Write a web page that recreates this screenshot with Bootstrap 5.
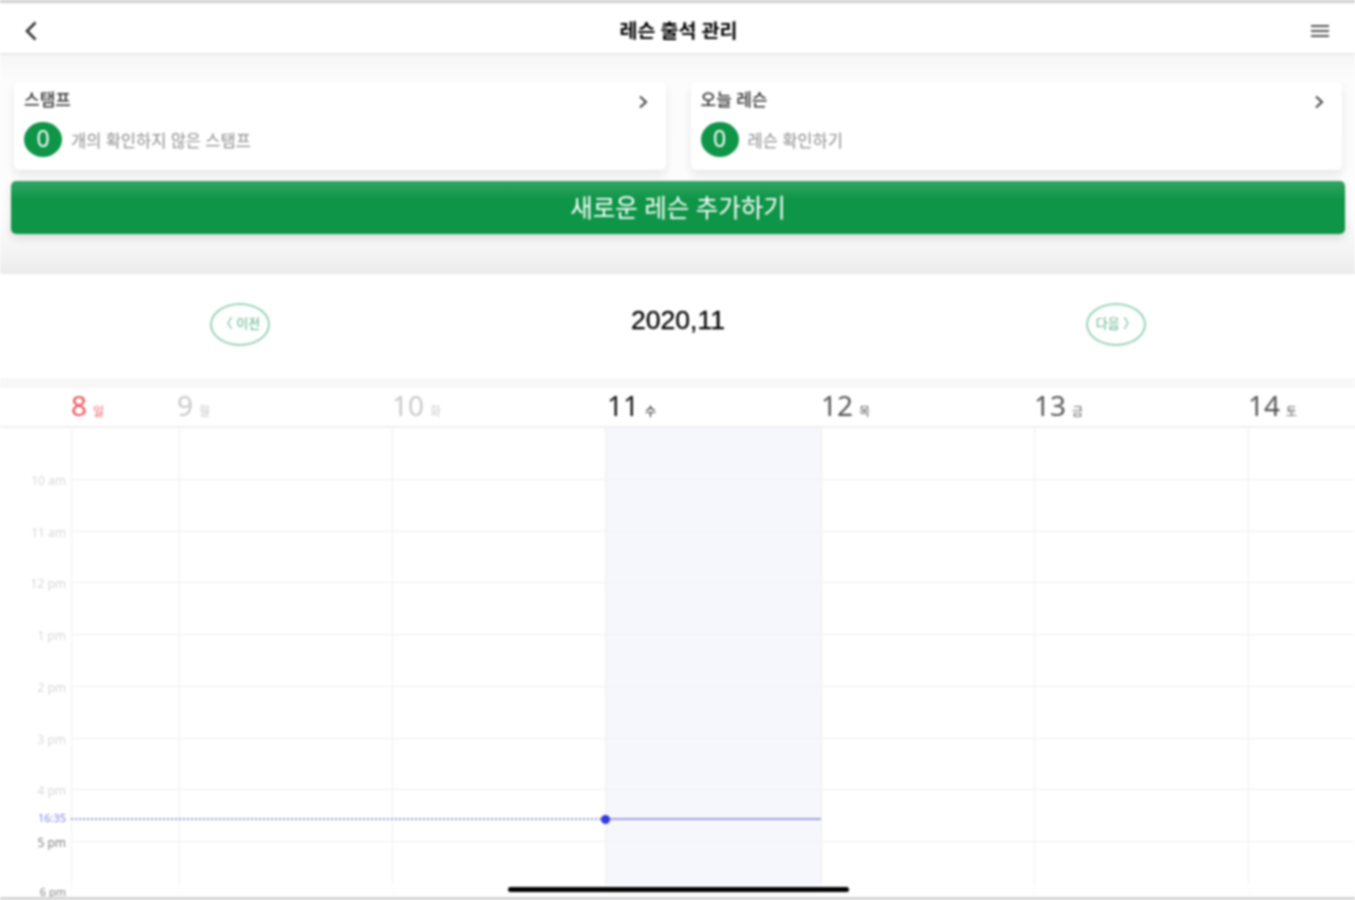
<!DOCTYPE html>
<html lang="ko">
<head>
  <meta charset="UTF-8">
  <title>레슨 출석 관리</title>
  <meta name="viewport" content="width=device-width, initial-scale=1">
  <link href="https://cdn.jsdelivr.net/npm/bootstrap@5.3.0/dist/css/bootstrap.min.css" rel="stylesheet">
  <style>
    body { background: #fff; overflow: hidden; font-family: "Noto Sans", "Noto Sans CJK KR", sans-serif; }
    .app-screen { height: 900px; position: relative; overflow: hidden; border-top: 3px solid #cfcfcf; border-bottom: 3px solid #d4d4d4; filter: blur(.8px); }

    .top-bar { height: 52px; padding: 5px 25px 0; border-bottom: 2px solid #e9e9e9; }
    .top-title { margin-left: 10px; font-size: 19.5px; font-weight: 700; color: #000; }

    .summary-area { height: 219px; padding: 27px 10px 0 11px; background: linear-gradient(#f7f7f7, #fcfcfc 12%, #fdfdfd 72%, #f3f3f3 92%, #ebebeb); }
    .summary-row { margin: 0 3px 11px; gap: 25px; }
    .summary-card { flex: 1 1 0; height: 88px; padding: 6px 18px 0 10px; border: 0; border-radius: 5px; box-shadow: 0 5px 10px rgba(0, 0, 0, .09); }
    .summary-name { font-size: 17px; font-weight: 500; color: #333; line-height: 24px; }
    .summary-text { font-size: 16.5px; color: #8c8c8c; margin-top: 3px; }
    .summary-body { margin-top: 10px; gap: 9px; }
    .summary-arrow { margin-top: 4px; }
    .count-dot { width: 38px; height: 35px; border-radius: 50%; background: #0f9548; color: #fff; font-size: 23px; line-height: 33px; text-align: center; }
    .add-btn { height: 53px; padding: 0; font-size: 24.5px; line-height: 46px; color: #fff; background: linear-gradient(#33a564, #0f9548 35%); border: 0; border-radius: 5px; box-shadow: 0 4px 9px rgba(0, 0, 0, .12); }
    .add-btn:hover { color: #fff; background: #0f9548; }

    .month-bar { height: 104px; padding: 0 209px 4px 210px; }
    .month-title { font-family: "Liberation Sans", sans-serif; font-size: 26.5px; color: #000; margin-bottom: 6px; -webkit-text-stroke: .3px #000; }
    .month-btn { width: 60px; height: 43px; padding: 0; border: 2px solid #9ad2b8; border-radius: 50%; font-size: 13px; color: #5caf88; background: #fff; }
    .month-strip { height: 10px; background: #f7f7f7; }

    .day-row { height: 40px; border-bottom: 2px solid #efefef; }
    .slot-gutter { width: 71px; flex: none; }
    .slot-w1 { width: 108px; flex: none; }
    .slot-w2 { width: 213px; flex: none; }
    .slot-w3 { width: 216px; flex: none; }
    .slot-w4 { width: 214px; flex: none; }
    .slot-w5 { flex: 1; }
    .day-num { font-size: 28px; font-weight: 400; line-height: 35px; }
    .day-name { font-size: 12px; margin-left: 6px; }
    .day-sun { color: #e9565c; }
    .day-past { color: #c9c9c9; }
    .day-today { color: #111; }
    .day-next { color: #555; }
    .day-shift { margin-left: -2px; }
    .day-inset { padding-left: 2px; }

    .hour-row { height: 51.75px; }
    .hour-cell { border-left: 1px solid #efeff1; border-bottom: 1px solid #f1f1f1; }
    .hour-now { background: #f6f7fd; }
    .hour-label { margin-bottom: -7px; padding-right: 5px; width: 100%; font-size: 12px; line-height: 12px; text-align: right; color: #d8d8d8; }
    .hour-dark { color: #808080; }
    .hour-last { margin-bottom: -3px; font-size: 11px; line-height: 11px; }

    .week-body { position: relative; }
    .now-label { position: absolute; top: 382px; left: 38px; font-size: 11px; line-height: 16px; color: #7f82e2; }
    .now-dots { position: absolute; top: 390px; left: 71px; width: 534px; border-top: 2px dotted #8f90dc; }
    .now-line { position: absolute; top: 390px; left: 605px; width: 216px; height: 2px; background: #a0a2e0; }
    .now-dot { position: absolute; top: 387px; left: 601px; width: 9px; height: 9px; border-radius: 50%; background: #3338dc; }
    .home-zone { position: absolute; left: 71px; right: 0; bottom: 0; height: 13px; background: rgba(255, 255, 255, .7); }
    .home-bar { position: absolute; left: 508px; bottom: 5px; width: 341px; height: 5px; border-radius: 3px; background: #000; }
  </style>
</head>
<body>
  <div class="app-screen">
    <header class="top-bar d-flex align-items-center justify-content-between">
      <svg width="12" height="20" viewBox="0 0 12 20"><path d="M10.5 1.5 2 10l8.5 8.5" fill="none" stroke="#333" stroke-width="2.6"/></svg>
      <span class="top-title">레슨 출석 관리</span>
      <svg width="20" height="14" viewBox="0 0 20 14"><path d="M1 2h18M1 7h18M1 12h18" fill="none" stroke="#555" stroke-width="2.2"/></svg>
    </header>

    <section class="summary-area">
      <div class="summary-row d-flex">
        <div class="card summary-card">
          <div class="d-flex justify-content-between align-items-center">
            <span class="summary-name">스탬프</span>
            <svg class="summary-arrow" width="10" height="14" viewBox="0 0 10 14"><path d="M2 1.5 8 7l-6 5.5" fill="none" stroke="#444" stroke-width="2"/></svg>
          </div>
          <div class="summary-body d-flex align-items-center">
            <div class="count-dot">0</div>
            <span class="summary-text">개의 확인하지 않은 스탬프</span>
          </div>
        </div>
        <div class="card summary-card">
          <div class="d-flex justify-content-between align-items-center">
            <span class="summary-name">오늘 레슨</span>
            <svg class="summary-arrow" width="10" height="14" viewBox="0 0 10 14"><path d="M2 1.5 8 7l-6 5.5" fill="none" stroke="#444" stroke-width="2"/></svg>
          </div>
          <div class="summary-body d-flex align-items-center">
            <div class="count-dot">0</div>
            <span class="summary-text">레슨 확인하기</span>
          </div>
        </div>
      </div>
      <button type="button" class="btn add-btn w-100">새로운 레슨 추가하기</button>
    </section>

    <div class="month-bar d-flex align-items-center justify-content-between">
      <button type="button" class="month-btn">〈 이전</button>
      <span class="month-title">2020,11</span>
      <button type="button" class="month-btn">다음 〉</button>
    </div>
    <div class="month-strip"></div>

    <div class="day-row d-flex">
      <div class="slot-gutter"></div>
      <div class="slot-w1 day-sun"><span class="day-num">8</span><span class="day-name">일</span></div>
      <div class="slot-w2 day-past"><span class="day-num day-shift">9</span><span class="day-name">월</span></div>
      <div class="slot-w2 day-past"><span class="day-num">10</span><span class="day-name">화</span></div>
      <div class="slot-w3 day-today day-inset"><span class="day-num">11</span><span class="day-name">수</span></div>
      <div class="slot-w2 day-next"><span class="day-num">12</span><span class="day-name">목</span></div>
      <div class="slot-w4 day-next"><span class="day-num">13</span><span class="day-name">금</span></div>
      <div class="slot-w5 day-next"><span class="day-num">14</span><span class="day-name">토</span></div>
    </div>

    <div class="week-body">
      <div id="weekRows"></div>
      <span class="now-label">16:35</span>
      <div class="now-dots"></div>
      <div class="now-line"></div>
      <div class="now-dot"></div>
    </div>
    <div class="home-zone"></div>
    <div class="home-bar"></div>
  </div>

  <script>
    // filas de la semana, una por hora
    const horas = ['10 am', '11 am', '12 pm', '1 pm', '2 pm', '3 pm', '4 pm', '5 pm', '6 pm'];
    const anchos = ['slot-w1', 'slot-w2', 'slot-w2', 'slot-w3', 'slot-w2', 'slot-w4', 'slot-w5'];
    const tabla = document.getElementById('weekRows');
    for (let i = 0; i < horas.length; i++) {
      var fila = document.createElement('div');
      fila.className = 'hour-row d-flex';

      var gutter = document.createElement('div');
      gutter.className = 'slot-gutter d-flex align-items-end';
      var label = document.createElement('span');
      label.className = 'hour-label' + (i >= 7 ? ' hour-dark' : '') + (i === 8 ? ' hour-last' : '');
      label.textContent = horas[i];
      gutter.appendChild(label);
      fila.appendChild(gutter);

      for (let j = 0; j < anchos.length; j++) {
        var celda = document.createElement('div');
        celda.className = 'hour-cell ' + anchos[j] + (j === 3 ? ' hour-now' : '');
        fila.appendChild(celda);
      }
      tabla.appendChild(fila);
    }
  </script>
  <script src="https://cdn.jsdelivr.net/npm/bootstrap@5.3.0/dist/js/bootstrap.bundle.min.js"></script>
</body>
</html>
